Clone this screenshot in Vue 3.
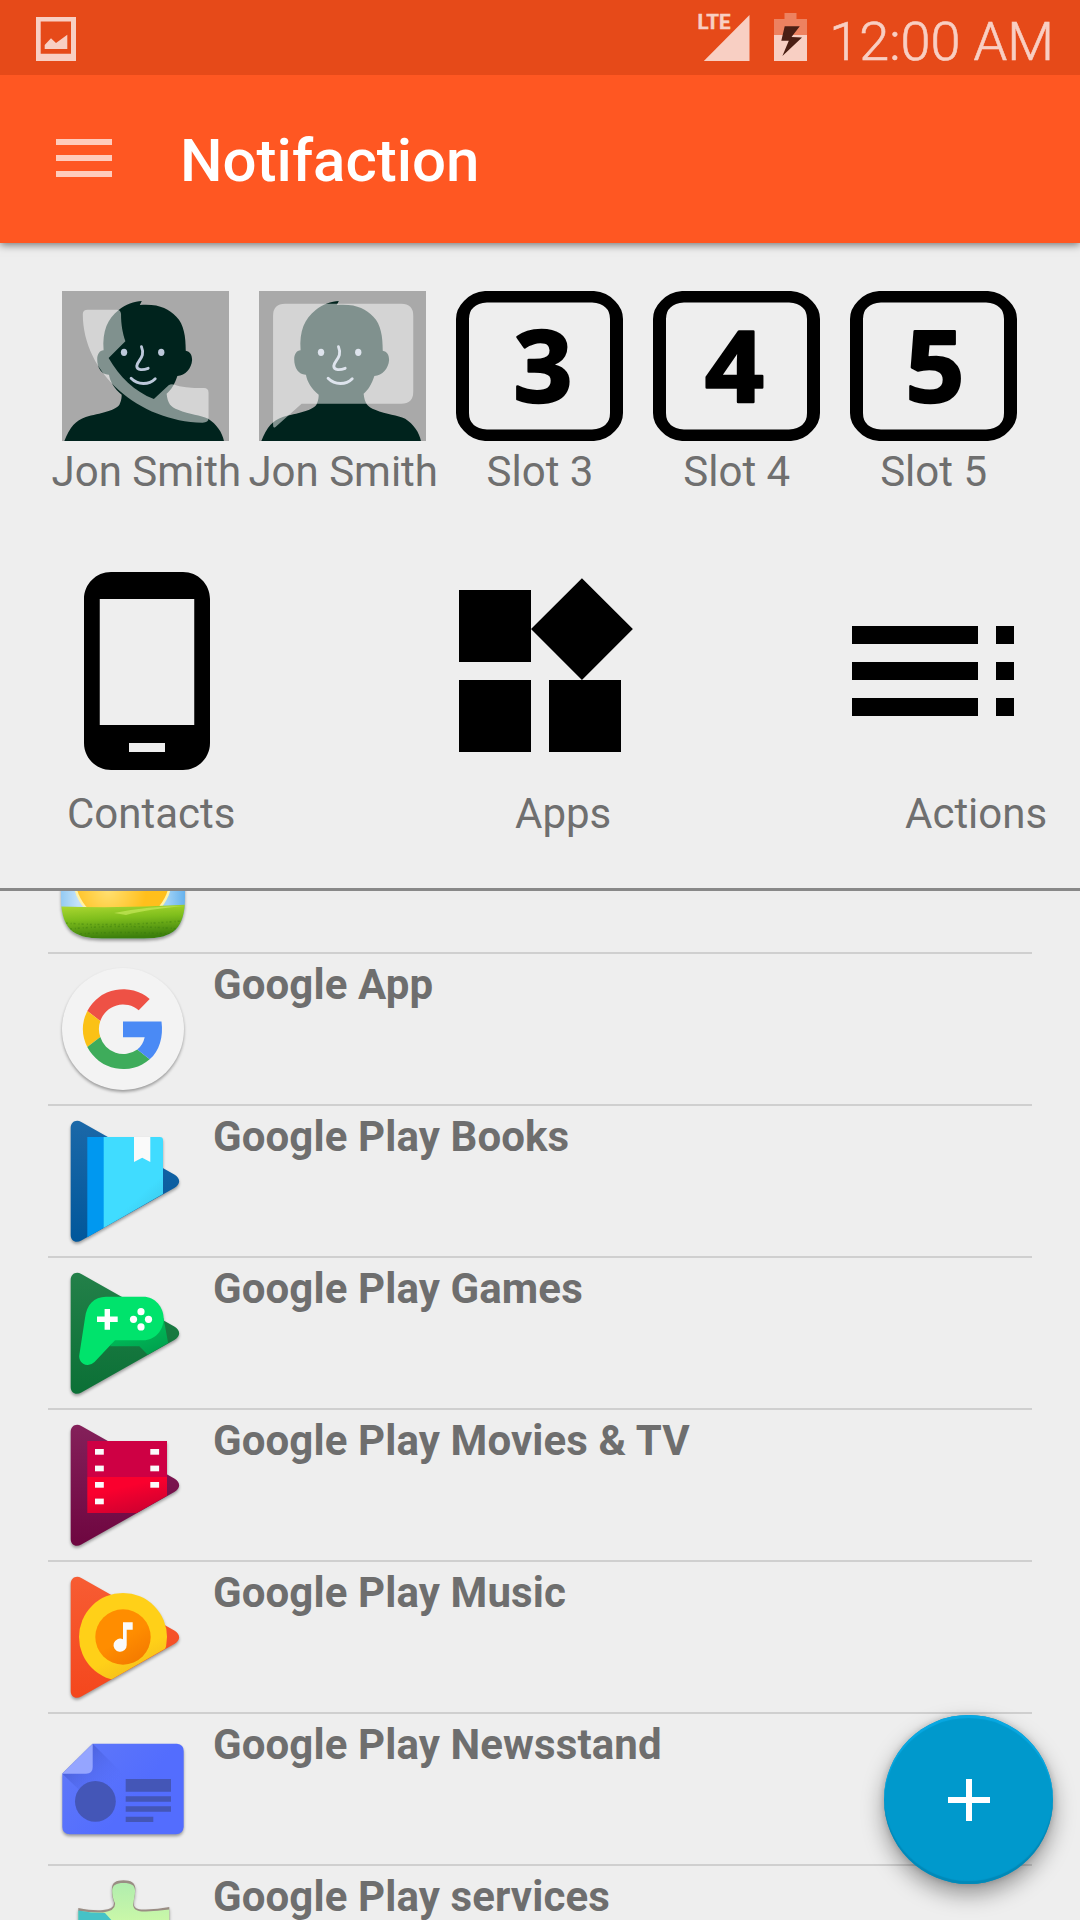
<script setup>
const slots = [
  { label: 'Jon Smith', kind: 'call' },
  { label: 'Jon Smith', kind: 'message' },
  { label: 'Slot 3', kind: 'number', digit: '3', x: 87 },
  { label: 'Slot 4', kind: 'number', digit: '4', x: 81.5 },
  { label: 'Slot 5', kind: 'number', digit: '5', x: 85 },
]

const categories = [
  {
    label: 'Contacts',
    align: 'contacts',
    path: 'M16 1H8C6.34 1 5 2.34 5 4v16c0 1.66 1.34 3 3 3h8c1.66 0 3-1.34 3-3V4c0-1.66-1.34-3-3-3zm-2 20h-4v-1h4v1zm3.25-3H6.75V4h10.5v14z',
  },
  {
    label: 'Apps',
    align: 'apps',
    path: 'M13 13v8h8v-8h-8zM3 21h8v-8H3v8zM3 3v8h8V3H3zm13.66-1.31L11 7.34 16.66 13l5.66-5.66-5.66-5.65z',
  },
  {
    label: 'Actions',
    align: 'actions',
    path: 'M3 9h14V7H3v2zm0 4h14v-2H3v2zm0 4h14v-2H3v2zm16 0h2v-2h-2v2zm0-10v2h2V7h-2zm0 6h2v-2h-2v2z',
  },
]

const apps = [
  { name: '', icon: 'weather' },
  { name: 'Google App', icon: 'google' },
  { name: 'Google Play Books', icon: 'books' },
  { name: 'Google Play Games', icon: 'games' },
  { name: 'Google Play Movies & TV', icon: 'movies' },
  { name: 'Google Play Music', icon: 'music' },
  { name: 'Google Play Newsstand', icon: 'news' },
  { name: 'Google Play services', icon: 'services' },
]

const play = 'M22.700 22C22.700 16 28 13 33.300 16L126.300 68.500C132.800 72.500 132.800 78 126.300 82L33.300 134.500C28 137.500 22.700 135 22.700 129Z'
const perforations = [
  [47, 39], [47, 55.6], [47, 72], [47, 88.6],
  [102.3, 39], [102.3, 55.6], [102.3, 72],
]
</script>

<template>
  <div class="screen">
    <header class="status">
      <svg class="shot" width="40" height="44" viewBox="0 0 40 44">
        <path fill-rule="evenodd" d="M0 0H40V44H0ZM4.7 4.5V36.7H35V4.5ZM8.7 32V28L15 21.3L20 26L31.3 17.7V32Z" />
      </svg>
      <div class="status-right">
        <svg width="55" height="50" viewBox="0 0 55 50">
          <path d="M8.8 50L54.5 4V50Z" />
          <text x="2.500" y="18" class="lte">LTE</text>
        </svg>
        <svg class="battery" width="33" height="48" viewBox="0 0 33 48">
          <path opacity=".42" d="M10.5 0H22.5V6H33V22H0V6H10.5Z" />
          <path d="M0 22H33V48H0Z" />
          <path fill="#4a1f14" d="M10.7 13.3H25.8L17.5 24L28 24.6L8.4 43L14.8 27.7H7.3Z" />
        </svg>
        <span class="clock">12:00 AM</span>
      </div>
    </header>

    <div class="appbar">
      <div class="menu"><i></i><i></i><i></i></div>
      <h1>Notifaction</h1>
    </div>

    <main>
      <section class="slots">
        <div v-for="(slot, i) in slots" :key="i" class="slot">
          <svg v-if="slot.kind !== 'number'" class="tile photo" viewBox="69 63 498 450" preserveAspectRatio="none">
            <path fill="#a9a9a9" d="M69 63H567V513H69Z" />
            <path
              fill="#00231d"
              d="M76 513C92 472 110 451 140 441C180 430 235 423 242 400C246 389 247 383 247 374C226 357 212 334 209 314C188 315 174 295 174 268C174 252 181 242 193 241C189 182 205 146 238 120C258 103 285 94 307 93L301 105C360 101 385 116 410 140C433 163 438 200 438 242C451 244 457 255 457 270C455 296 437 317 413 318C406 341 394 361 381 371C384 400 393 411 415 419C450 434 482 435 505 446C530 462 547 487 552 513Z"
            />
            <g fill="#bcc8da">
              <ellipse cx="254" cy="247" rx="9.5" ry="11" />
              <ellipse cx="365" cy="247" rx="9.5" ry="11" />
            </g>
            <g fill="none" stroke="#bcc8da" stroke-width="8.5" stroke-linecap="round">
              <path d="M306 230C319 262 294 270 292 288C292 302 312 300 326 295" />
              <path d="M275 325C295 346 329 345 347 326" />
            </g>
            <path
              v-if="slot.kind === 'call'"
              fill="#fff"
              fill-opacity=".5"
              d="M146 119H232Q244 119 245 132C245 165 250 190 258 214L208 264C240 320 285 365 343 387L387 346Q394 341 404 344Q430 354 492 354Q506 354 506 368V445Q506 458 488 458C300 455 131 310 131 132Q131 119 146 119Z"
            />
            <path
              v-else
              fill="#fff"
              fill-opacity=".5"
              d="M147 101H493Q529 101 529 137V365Q529 401 493 401H196L119 470Q111 477 111 465V137Q111 101 147 101Z"
            />
          </svg>
          <svg v-else class="tile" viewBox="0 0 167 150" preserveAspectRatio="none">
            <path
              fill-rule="evenodd"
              d="M29 0H138Q151 1 159 10Q167 18 167 28V122Q167 132 159 140Q151 149 138 150H29Q16 149 8 140Q0 132 0 122V28Q0 18 8 10Q16 1 29 0ZM31 11.5Q13 13 13 28V122Q13 137 31 138.5H136Q154 137 154 122V28Q154 13 136 11.5Z"
            />
            <text :transform="`translate(${slot.x} 110.500) scale(1.05 1)`" text-anchor="middle" class="digit">{{ slot.digit }}</text>
          </svg>
          <span class="label">{{ slot.label }}</span>
        </div>
      </section>

      <section class="categories">
        <div v-for="c in categories" :key="c.label" class="category">
          <svg width="216" height="216" viewBox="0 0 24 24"><path :d="c.path" /></svg>
          <span class="label" :class="c.align">{{ c.label }}</span>
        </div>
      </section>
    </main>

    <ul class="list">
      <li v-for="app in apps" :key="app.icon">
        <svg class="app-icon" width="150" height="150" viewBox="0 0 150 150">
          <defs>
            <clipPath :id="`edge-${app.icon}`"><path d="M0 0H150V68L0 153.7Z" /></clipPath>
          </defs>

          <template v-if="app.icon === 'weather'">
            <defs>
              <linearGradient id="sky" x1="0" x2="1">
                <stop offset="0" stop-color="#6fb8f0" />
                <stop offset=".2" stop-color="#c4e2f8" />
                <stop offset=".8" stop-color="#9dd0f5" />
                <stop offset="1" stop-color="#3c9be8" />
              </linearGradient>
              <radialGradient id="sun" cx=".35" cy=".65" r=".4">
                <stop offset="0" stop-color="#ffe071" />
                <stop offset="1" stop-color="#ffbf1c" />
              </radialGradient>
              <linearGradient id="grass" x1="0" x2=".15" y1="0" y2="1">
                <stop offset="0" stop-color="#b4dc35" />
                <stop offset=".35" stop-color="#7fbe1c" />
                <stop offset=".75" stop-color="#3c7f0c" />
              </linearGradient>
              <clipPath id="weather-shape"><path d="M13 20H137V95C137 126 126 136.500 96 136.500H54C24 136.500 13 126 13 95Z" /></clipPath>
            </defs>
            <g clip-path="url(#weather-shape)">
              <path fill="url(#sky)" d="M0 0H150V150H0Z" />
              <circle cx="74.500" cy="74" r="50" fill="#fff3a8" />
              <circle cx="74.500" cy="74" r="47.500" fill="url(#sun)" />
              <path fill="url(#grass)" d="M0 104Q75 107 150 102V150H0Z" />
              <path fill="#d6f06a" opacity=".55" d="M66 111Q100 104 137 104Q100 107 78 113Z" />
              <path fill="none" stroke="#2f6f0c" stroke-width="1.500" stroke-dasharray="2 3 1 2" opacity=".35" d="M18 121Q60 125 134 119M22 127Q70 122 132 127M32 132Q70 129 124 132" />
            </g>
          </template>

          <template v-else-if="app.icon === 'google'">
            <circle cx="75" cy="75" r="61" fill="#f3f3f3" />
            <path fill="#ee5145" d="M101.700 45L90.700 56.300A24 24 0 0 0 52.300 67L39.300 57A40.500 40.500 0 0 1 101.700 45Z" />
            <path fill="#fbc116" d="M39.300 57L52.300 67A24 24 0 0 0 52.300 83L39.300 93A40.500 40.500 0 0 1 39.300 57Z" />
            <path fill="#3eac5b" d="M39.300 93L52.300 83A24 24 0 0 0 89.300 95.500L101.700 105.300A40.500 40.500 0 0 1 39.300 93Z" />
            <path fill="#4a8af5" d="M75 67.500H113.500C115.500 83 111.500 97 101.700 105.300L89.300 95.500Q95 91 96.700 83.200H75Z" />
          </template>

          <template v-else-if="app.icon === 'books'">
            <defs>
              <linearGradient id="b0" x2="0" y2="1"><stop offset="0" stop-color="#1b68a8" /><stop offset="1" stop-color="#01579b" /></linearGradient>
              <linearGradient id="b1" x1=".3" y1=".3" x2=".65" y2="1"><stop offset=".45" stop-color="#40dcff" /><stop offset="1" stop-color="#39bfe0" /></linearGradient>
            </defs>
            <path fill="url(#b0)" :d="play" />
            <g clip-path="url(#edge-books)">
              <path fill="#0098f0" d="M39.300 31H56V140H39.300Z" />
              <path fill="url(#b1)" d="M55.700 31H112Q115 31 115 34V140H55.700Z" />
              <path fill="#fafafa" d="M86 31H102.300V56L94.200 51.700L86 56Z" />
            </g>
          </template>

          <template v-else-if="app.icon === 'games'">
            <defs>
              <linearGradient id="g0" x2="0" y2="1"><stop offset="0" stop-color="#238049" /><stop offset="1" stop-color="#0b7036" /></linearGradient>
              <linearGradient id="g1" x1=".5" x2="1" y2="1"><stop offset="0" stop-color="#00c15a" /><stop offset="1" stop-color="#00964a" /></linearGradient>
            </defs>
            <path fill="url(#g0)" :d="play" />
            <g clip-path="url(#edge-games)">
              <path fill="url(#g1)" d="M62 88.300L67 80H100L115.500 60L122 95L105 102L91.300 88.300Z" />
            </g>
            <path fill="#00e36c" d="M58 38.700H95.300C107 38.700 115.700 49 115.700 60.500C115.700 72 107 82.300 95.300 82.300H67L46.500 104Q43 107.300 39.300 107C34 106.500 30.500 102 31.300 97L37 60C38.500 47 46 38.700 58 38.700Z" />
            <g fill="#fff">
              <path d="M56.600 51H62V58.600H69.700V64H62V71.700H56.600V64H49V58.600H56.600Z" />
              <circle cx="93" cy="53.700" r="3.600" /><circle cx="85.500" cy="61.300" r="3.600" />
              <circle cx="100.500" cy="61.300" r="3.600" /><circle cx="93" cy="68.900" r="3.600" />
            </g>
          </template>

          <template v-else-if="app.icon === 'movies'">
            <defs>
              <linearGradient id="m0" x2="0" y2="1"><stop offset="0" stop-color="#84205a" /><stop offset="1" stop-color="#6e0640" /></linearGradient>
              <linearGradient id="m1" x1=".25" x2=".75" y2="1"><stop offset=".3" stop-color="#fa002e" /><stop offset="1" stop-color="#cc0030" /></linearGradient>
            </defs>
            <path fill="url(#m0)" :d="play" />
            <g clip-path="url(#edge-movies)">
              <path fill="#ce0044" d="M39.300 31H119V67H39.300Z" />
              <path fill="url(#m1)" d="M39.300 67H119V103H39.300Z" />
            </g>
            <rect v-for="(p, i) in perforations" :key="i" :x="p[0]" :y="p[1]" width="8.800" height="5.700" fill="#fafafa" />
          </template>

          <template v-else-if="app.icon === 'music'">
            <defs>
              <linearGradient id="u0" x2="0" y2="1"><stop offset="0" stop-color="#f75c33" /><stop offset="1" stop-color="#f4471d" /></linearGradient>
              <linearGradient id="u1" x1=".3" x2=".75" y2="1"><stop offset=".65" stop-color="#ffd018" /><stop offset="1" stop-color="#f2b91c" /></linearGradient>
              <linearGradient id="u2" x2=".6" y2="1"><stop offset=".6" stop-color="#ff8d00" /><stop offset="1" stop-color="#f57c00" /></linearGradient>
            </defs>
            <path fill="url(#u0)" :d="play" />
            <g clip-path="url(#edge-music)">
              <circle cx="75" cy="75" r="44" fill="url(#u1)" />
              <circle cx="75" cy="75" r="27.700" fill="url(#u2)" />
            </g>
            <path fill="#fafafa" d="M75 60.300H84.700V67.700H78.700V83A6.600 6.600 0 1 1 75 77.300Z" />
          </template>

          <template v-else-if="app.icon === 'news'">
            <defs>
              <linearGradient id="n0" x2="1" y2=".6"><stop offset="0" stop-color="#6079f8" /><stop offset=".7" stop-color="#536dfe" /></linearGradient>
              <linearGradient id="n1" x1=".2" y1=".2" x2=".8" y2=".8"><stop offset="0" stop-color="#3d50c0" stop-opacity=".6" /><stop offset="1" stop-color="#536dfe" stop-opacity="0" /></linearGradient>
            </defs>
            <path fill="url(#n0)" d="M44.700 29.700H129Q135.700 30.500 135.700 37V113Q135 120.300 128 120.300H22Q14.300 120 14.300 113V59.700Z" />
            <path fill="url(#n1)" d="M44.700 29.700L75 60L46 90L14.300 59.700Z" />
            <path fill="#95a5ff" d="M44.700 29.700V53Q44.700 59.700 38 59.700H14.300Z" />
            <g fill="#4456b7">
              <circle cx="47.400" cy="87.400" r="20.400" />
              <path d="M77.700 65H123V77.700H77.700ZM77.700 82.300H123V87.700H77.700ZM77.700 92.300H123V97.700H77.700ZM77.700 102.700H105.300V108H77.700Z" />
            </g>
          </template>

          <template v-else>
            <defs>
              <linearGradient id="s0" x2="0" y2="1"><stop offset="0" stop-color="#b1edae" /><stop offset=".3" stop-color="#cbf8a8" /><stop offset="1" stop-color="#c5f59b" /></linearGradient>
            </defs>
            <path fill="#9a8d84" d="M30.300 42Q45 45 55 44Q67 43 66 36C64 30 63.700 26 64 22C64 17 68 14.300 75.500 14.300C83 14.300 87 17 87.300 22C87.500 27 86 32 85.500 36C85 43 91 44 98 43.500Q110 43 121.300 41V60H30.300Z" />
            <path fill="url(#s0)" d="M30.300 45Q45 46.500 55 46.500Q68 45 67 37C64.500 32 64.200 27 64.200 24C65 19 68 17 75.500 17C83 17 86.500 19 87 24C87.200 28 86 33 85 38C85 45 92 45.800 98 45.500Q110 45 121.300 43.500V150H30.300Z" />
            <path fill="#45c2c7" d="M30.300 44.500Q43 47 57 47L66 57V150H30.300Z" />
          </template>
        </svg>
        <span class="name">{{ app.name }}</span>
      </li>
    </ul>

    <button class="fab" aria-label="Add">
      <svg width="42" height="42" viewBox="0 0 42 42"><path fill="#fff" d="M18 0H24V18H42V24H24V42H18V24H0V18H18Z" /></svg>
    </button>
  </div>
</template>

<style>
body {
  margin: 0;
  background: #eee;
}
</style>

<style scoped>
.screen {
  position: relative;
  display: flex;
  flex-direction: column;
  width: 1080px;
  height: 1920px;
  overflow: hidden;
  background: #eee;
  font-family: Roboto, sans-serif;
}
svg {
  display: block;
  flex: none;
}
.status {
  display: flex;
  justify-content: space-between;
  box-sizing: border-box;
  height: 75px;
  padding: 0 26px 0 36px;
  background: #e64a19;
  fill: #f8cfc3;
  color: #f8cfc3;
  z-index: 2;
}
.shot {
  margin-top: 17px;
}
.status-right {
  display: flex;
  align-items: flex-end;
  height: 61px;
}
.lte {
  font-size: 20.5px;
  font-weight: 700;
  stroke: #f8cfc3;
  stroke-width: .4px;
}
.battery {
  margin: 0 22px 0 24px;
}
.clock {
  height: 61px;
  font-size: 54px;
  font-weight: 300;
  line-height: 83px;
  white-space: nowrap;
  -webkit-text-stroke: .6px #f8cfc3;
}
.appbar {
  display: flex;
  align-items: center;
  height: 168px;
  padding-left: 56px;
  background: #ff5722;
  box-shadow: 0 2px 8px rgba(0, 0, 0, .5);
  z-index: 1;
}
.menu {
  display: flex;
  flex-direction: column;
  gap: 10px;
  width: 56px;
  margin-bottom: 2px;
}
.menu i {
  height: 6px;
  background: #ffccbc;
}
h1 {
  margin: 4px 0 0 68px;
  color: #fff;
  font-size: 60px;
  font-weight: 500;
  line-height: 70px;
}
main {
  box-sizing: border-box;
  height: 648px;
  padding-top: 48px;
  border-bottom: 3px solid #888;
}
.slots {
  display: flex;
  padding: 0 48px;
}
.slot {
  display: flex;
  flex: 1 1 0;
  min-width: 0;
  flex-direction: column;
  align-items: center;
}
.tile {
  width: 167px;
  height: 150px;
}
.photo {
  margin-right: 1px;
}
.digit {
  font-family: "Open Sans", sans-serif;
  font-size: 98px;
  font-weight: 700;
  stroke: #000;
  stroke-width: 2.5px;
  stroke-linejoin: round;
}
.label {
  color: #6f6f6f;
  font-size: 42px;
  line-height: 50px;
  white-space: nowrap;
}
.slot .label {
  margin-top: 6px;
}
.categories {
  display: flex;
  justify-content: space-between;
  margin: 65.6px 39px 0 39px;
}
.category {
  display: flex;
  flex-direction: column;
  width: 216px;
}
.category .label {
  margin-top: 10.4px;
}
.contacts {
  padding-left: 28px;
}
.apps {
  padding-left: 83px;
}
.actions {
  padding-left: 80px;
}
.list {
  flex: 1;
  min-height: 0;
  overflow: hidden;
  margin: 0;
  padding: 0 48px;
  list-style: none;
}
.list li {
  display: flex;
  height: 150px;
  border-bottom: 2px solid #cfcfcf;
}
.list li:first-child {
  margin-top: -89px;
}
.app-icon {
  filter: drop-shadow(0 2px 1.5px rgba(0, 0, 0, .35));
}
.name {
  margin: 6px 0 0 15px;
  color: #6e6e6e;
  font-size: 42px;
  font-weight: 700;
  letter-spacing: .11px;
  line-height: 50px;
  white-space: nowrap;
}
.fab {
  position: absolute;
  right: 27px;
  bottom: 36px;
  display: flex;
  align-items: center;
  justify-content: center;
  width: 169px;
  height: 169px;
  padding: 0;
  border: 0;
  border-radius: 50%;
  background: #09c;
  box-shadow: 0 10px 22px rgba(0, 0, 0, .38), 0 0 6px rgba(0, 0, 0, .18), inset 0 3px 1px #08a8e2, inset 0 -3px 1px #0089b8;
}
</style>
